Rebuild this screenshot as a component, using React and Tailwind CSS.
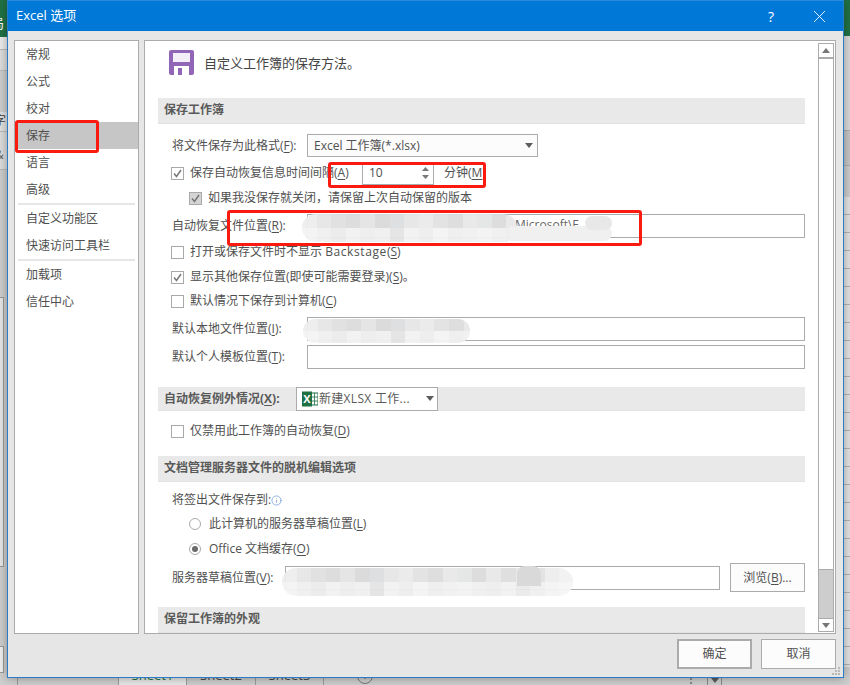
import React from 'react';
import { Info, X } from 'lucide-react';

const navGroups = [
    ['常规', '公式', '校对', '保存', '语言', '高级'],
    ['自定义功能区', '快速访问工具栏'],
    ['加载项', '信任中心'],
];

// mosaic colours of the smudged paths in the screenshot
const mosaicA = ['bg-[#eeeeee]', 'bg-[#e6e6e6]', 'bg-[#e0e0e0]', 'bg-[#dcdcdc]', 'bg-[#e4e4e4]', 'bg-[#dadada]', 'bg-[#dcdee0]', 'bg-[#e6e6e6]', 'bg-[#eaeaea]', 'bg-[#e2e2e2]', 'bg-[#dddddd]', 'bg-[#e8e8e8]', 'bg-[#e4e6e6]', 'bg-[#dcdcdc]', 'bg-[#e8e8e8]', 'bg-[#dedede]', 'bg-[#e6e8e8]', 'bg-[#e2e2e2]', 'bg-[#eeeeee]', 'bg-[#f2f2f2]'];
const mosaicB = ['bg-[#f4f4f4]', 'bg-[#f0f0f0]', 'bg-[#ececec]', 'bg-[#f2f2f2]', 'bg-[#eeeeee]', 'bg-[#f0f0f0]', 'bg-[#e4e4e4]', 'bg-[#f2f2f2]', 'bg-[#eeeeee]', 'bg-[#f4f4f4]', 'bg-[#efefef]', 'bg-[#f1f1f1]', 'bg-[#f3f3f3]', 'bg-[#f0f0f0]', 'bg-[#eeeeee]', 'bg-[#f2f2f2]', 'bg-[#eaeaea]', 'bg-[#f0f0f0]', 'bg-[#f4f4f4]', 'bg-[#f6f6f6]'];

const Key = ({ children }) => <span className="underline underline-offset-2">{children}</span>;

const Caret = ({ className = '', w = 8, h = 5, fill = '#5c5c5c' }) => (
    <svg width={w} height={h} viewBox="0 0 8 5" preserveAspectRatio="none" className={className}>
        <polygon points="0,0 8,0 4,5" fill={fill} />
    </svg>
);

const SectionBar = ({ children, className = '' }) => (
    <div className={`w-[647px] bg-[#e9e9e9] border-b border-[#e2e2e2] pl-[6px] flex items-center font-bold text-[#5a5a5a] ${className}`}>
        {children}
    </div>
);

const Check = ({ checked, disabled }) => (
    <span className={`w-[13px] h-[13px] border border-[#a9a9a9] shrink-0 flex items-center justify-center ${disabled ? 'bg-[#d4d4d4]' : 'bg-white'}`}>
        {checked && (
            <svg width="11" height="11" viewBox="0 0 11 11">
                <polyline points="2,5.5 4.5,8.5 9,2" fill="none" stroke="#777777" strokeWidth="1.5" />
            </svg>
        )}
    </span>
);

const CheckRow = ({ checked, disabled, className = '', children }) => (
    <div className={`flex items-center h-[24px] ${className}`}>
        <Check checked={checked} disabled={disabled} />
        <span className="ml-[6px]">{children}</span>
    </div>
);

const Radio = ({ checked, children }) => (
    <div className="flex items-center h-[25px] pl-[31px]">
        <span className="w-[12px] h-[12px] rounded-full border border-[#a9a9a9] flex items-center justify-center">
            {checked && <span className="w-[6px] h-[6px] rounded-full bg-[#6a6a6a]" />}
        </span>
        <span className="ml-[8px]">{children}</span>
    </div>
);

const Smudge = ({ className, cells }) => (
    <div className={`absolute overflow-hidden rounded-[14px] flex flex-col opacity-95 ${className}`}>
        <div className="flex h-1/2">
            {cells.map((c, i) => <div key={i} className={`w-[14.6px] shrink-0 ${c}`} />)}
        </div>
        <div className="flex h-1/2">
            {mosaicB.map((c, i) => <div key={i} className={`w-[14.6px] shrink-0 ${c}`} />)}
        </div>
    </div>
);

const RedBox = ({ className }) => (
    <div className={`absolute border-[3px] border-[#fb1a10] rounded-[3px] ${className}`} />
);

const FloppyIcon = () => (
    <svg width="25" height="25" viewBox="0 0 25 25" className="block">
        <path d="M0 2a2 2 0 0 1 2-2h21a2 2 0 0 1 2 2v21a2 2 0 0 1-2 2H2a2 2 0 0 1-2-2z" fill="#9266b6" />
        <rect x="4" y="3" width="17" height="9" fill="#f3eef8" />
        <rect x="5" y="16" width="15" height="9" fill="#ffffff" />
        <rect x="9" y="18" width="4" height="7" fill="#9266b6" />
    </svg>
);

const ExcelIcon = () => (
    <svg width="16" height="16" viewBox="0 0 16 16" className="shrink-0 mr-[1px]">
        <rect x="6" y="2" width="10" height="12" fill="#ffffff" stroke="#1e7145" />
        <path d="M9 2v12M12.5 2v12M6 6h10M6 10h10" stroke="#1e7145" strokeWidth="0.8" />
        <rect x="0" y="0.5" width="10" height="15" fill="#1e7145" />
        <text x="5" y="12" textAnchor="middle" fontSize="11" fontWeight="700" fill="#ffffff">X</text>
    </svg>
);

const Backdrop = () => (
    <div className="absolute inset-0 bg-[#cfcfcf] overflow-hidden">
        <div className="absolute left-0 top-0 w-full h-[37px] bg-[#217346]" />
        <span className="absolute left-[-9px] top-[14px] text-[13px] text-white">局</span>
        <div className="absolute left-0 top-[37px] w-[7px] h-[12px] bg-[#eeeeee]" />
        <div className="absolute left-0 top-[49px] w-[7px] h-[22px] bg-[#dfdfdf] border-y border-[#bdbdbd]" />
        <div className="absolute left-0 top-[112px] w-[7px] h-[20px] bg-[#e2e2e2]" />
        <span className="absolute left-[-6px] top-[112px] text-[12px] text-[#444444]">字</span>
        <div className="absolute left-0 top-[131px] w-[7px] h-[39px] bg-[#dedede] border-y border-[#bbbbbb]" />
        <span className="absolute left-[-5px] top-[146px] text-[12px] text-[#666666]">&amp;</span>
        <div className="absolute left-0 top-[297px] w-[4px] h-[270px] bg-[#e8e8e8] border-r border-y border-[#9a9a9a]" />
        <div className="absolute left-0 top-[646px] w-[4px] h-[27px] bg-[#f2f2f2] border-r border-y border-[#9a9a9a]" />

        <div className="absolute left-[843px] top-[130px] w-[7px] h-[36px] bg-[#c8c8c8] border-y border-[#b0b0b0]" />
        <div className="absolute left-[843px] top-[197px] w-[7px] h-[470px] bg-[repeating-linear-gradient(to_bottom,#e6e6e6_0px,#e6e6e6_17px,#b5b5b5_17px,#b5b5b5_18px)]" />
        <div className="absolute left-[843px] top-[36px] w-[7px] h-[94px] bg-[#dcdcdc]" />

        {/* sheet tabs, mostly under the dialog */}
        <div className="absolute left-[17px] top-[666px] h-[19px] flex items-start text-[13px] leading-[19px] text-[#444444]">
            <div className="w-[101px] border-l border-[#9c9c9c] h-full" />
            <div className="w-[69px] h-full text-center bg-[#e9e9e9] border-x border-[#9c9c9c] text-[#217346]">Sheet1</div>
            <div className="w-[69px] h-full text-center border-r border-[#9c9c9c]">Sheet2</div>
            <div className="w-[68px] h-full text-center border-r border-[#9c9c9c]">Sheet3</div>
            <div className="ml-[33px] mt-[2px] w-[16px] h-[16px] rounded-full border border-[#777777] flex items-center justify-center text-[12px] leading-none">+</div>
        </div>
        <svg width="2" height="7" viewBox="0 0 2 7" className="absolute left-[690px] top-[678px]">
            <path d="M0 0h2v2H0zM0 4h2v2H0z" fill="#8a8a8a" />
        </svg>
        <div className="absolute left-[707px] top-[678px] w-[15px] h-[7px] border-x border-[#8c8c8c] flex justify-center">
            <Caret />
        </div>
    </div>
);

export default function App() {
    return (
        <div className="relative w-[850px] h-[685px] overflow-hidden text-[12px] text-[#505050] font-['Open_Sans','Noto_Sans_CJK_SC',sans-serif]">
            <Backdrop />

            {/* dialog window */}
            <div className="absolute left-[7px] top-0 w-[837px] h-[678px] bg-[#e6e6e6] border border-t-0 border-[#2b7cc7] shadow-[0_0_10px_rgba(0,0,0,0.35)] flex flex-col">
                <div className="h-[31px] shrink-0 bg-[#0078d7] border-t border-[#2a8ade] flex items-center text-white pl-[8px] pr-[13px] text-[13px]">
                    <span>Excel 选项</span>
                    <span className="ml-auto mr-[35px] text-[14px]">?</span>
                    <X size={21} strokeWidth={1} />
                </div>

                <div className="flex gap-[5px] pl-[6px] pr-[7px] pt-[9px]">
                    {/* left nav */}
                    <nav className="w-[125px] h-[594px] bg-white border border-[#ababab] p-0">
                        {navGroups.map((group, g) => (
                            <div key={g} className={g > 0 ? 'border-t-2 border-[#e6e6e6] mx-[3px]' : ''}>
                                {group.map((item) => (
                                    <div
                                        key={item}
                                        className={`h-[27px] flex items-center ${g > 0 ? 'pl-[8px]' : 'pl-[11px]'} ${item === '保存' ? 'bg-[#c6c6c6]' : ''}`}
                                    >
                                        {item}
                                    </div>
                                ))}
                            </div>
                        ))}
                    </nav>

                    {/* right panel */}
                    <div className="w-[692px] h-[594px] bg-white border border-[#ababab] flex">
                        <div className="flex-1 overflow-hidden pl-[13px]">
                            <div className="h-[57px] pl-[11px] pt-[9px] flex items-start">
                                <FloppyIcon />
                                <span className="ml-[10px] mt-[4px] text-[13px] leading-[18px] text-[#444444]">自定义工作簿的保存方法。</span>
                            </div>

                            <SectionBar className="h-[26px] pb-[2px]">保存工作簿</SectionBar>

                            <div className="flex items-center h-[23px] mt-[10px] pl-[14px]">
                                <span className="w-[135px]">将文件保存为此格式(<Key>F</Key>):</span>
                                <div className="w-[231px] h-[23px] bg-[#fcfcfc] border border-[#ababab] flex items-center pl-[6px] pr-[4px]">
                                    <span>Excel 工作簿(*.xlsx)</span>
                                    <Caret className="ml-auto" />
                                </div>
                            </div>

                            <div className="flex items-center h-[24px] mt-[4px] pl-[13px]">
                                <Check checked />
                                <span className="ml-[6px] w-[172px] whitespace-nowrap">保存自动恢复信息时间间隔(<Key>A</Key>)</span>
                                <div className="w-[72px] h-[23px] border border-[#ababab] bg-white flex items-center pl-[6px] pr-[4px]">
                                    <span>10</span>
                                    <div className="ml-auto flex flex-col gap-[4px]">
                                        <Caret className="rotate-180" w={7} h={4} fill="#777777" />
                                        <Caret w={7} h={4} fill="#777777" />
                                    </div>
                                </div>
                                <span className="ml-[10px]">分钟(<Key>M</Key>)</span>
                            </div>

                            <CheckRow checked disabled className="mt-[1px] pl-[31px]">如果我没保存就关闭，请保留上次自动保留的版本</CheckRow>

                            <div className="flex items-center h-[24px] mt-[4px] pl-[14px]">
                                <span className="w-[135px]">自动恢复文件位置(<Key>R</Key>):</span>
                                <div className="w-[498px] h-[24px] border border-[#ababab] bg-white" />
                            </div>

                            <CheckRow className="mt-[2px] pl-[13px]">打开或保存文件时不显示 <span className="tracking-[0.6px]">Backstage</span>(<Key>S</Key>)</CheckRow>
                            <CheckRow checked className="mt-[1px] pl-[13px]">显示其他保存位置(即使可能需要登录)(<Key>S</Key>)。</CheckRow>
                            <CheckRow className="pl-[13px]">默认情况下保存到计算机(<Key>C</Key>)</CheckRow>

                            <div className="flex items-center h-[24px] mt-[4px] pl-[14px]">
                                <span className="w-[135px]">默认本地文件位置(<Key>I</Key>):</span>
                                <div className="w-[498px] h-[24px] border border-[#ababab] bg-white" />
                            </div>
                            <div className="flex items-center h-[24px] mt-[4px] pl-[14px]">
                                <span className="w-[135px]">默认个人模板位置(<Key>T</Key>):</span>
                                <div className="w-[498px] h-[24px] border border-[#ababab] bg-white" />
                            </div>

                            <SectionBar className="h-[24px] mt-[18px]">
                                <span className="w-[132px]">自动恢复例外情况(<Key>X</Key>):</span>
                                <div className="w-[142px] h-[24px] bg-white border border-[#ababab] flex items-center pl-[5px] pr-[3px] font-normal">
                                    <ExcelIcon />
                                    <span className="whitespace-nowrap tracking-[0.3px]">新建XLSX 工作...</span>
                                    <Caret className="ml-auto" />
                                </div>
                            </SectionBar>

                            <CheckRow className="mt-[8px] pl-[13px]">仅禁用此工作簿的自动恢复(<Key>D</Key>)</CheckRow>

                            <SectionBar className="h-[26px] mt-[13px] pb-[2px]">文档管理服务器文件的脱机编辑选项</SectionBar>

                            <div className="flex items-center h-[22px] mt-[7px] pl-[14px]">
                                <span>将签出文件保存到:</span>
                                <Info size={11} strokeWidth={1.3} className="text-[#4a80cf]" />
                            </div>
                            <Radio>此计算机的服务器草稿位置(<Key>L</Key>)</Radio>
                            <Radio checked>Office 文档缓存(<Key>O</Key>)</Radio>

                            <div className="flex items-center h-[29px] mt-[2px] pl-[14px]">
                                <span className="w-[113px]">服务器草稿位置(<Key>V</Key>):</span>
                                <div className="w-[435px] h-[24px] border border-[#ababab] bg-white" />
                                <button className="ml-[10px] w-[75px] h-[29px] bg-[#fcfcfc] border border-[#ababab] text-[#505050]">浏览(<Key>B</Key>)...</button>
                            </div>

                            <SectionBar className="h-[26px] mt-[15px] pb-[2px]">保留工作簿的外观</SectionBar>
                        </div>

                        {/* scrollbar */}
                        <div className="w-[16px] mr-[1px] mt-[2px] mb-[1px] border-x border-[#ababab] flex flex-col bg-[#cdcdcd]">
                            <div className="h-[14px] bg-white border-t border-[#ababab] flex items-center justify-center">
                                <Caret className="rotate-180" fill="#777777" />
                            </div>
                            <div className="h-[513px] bg-white border-t-2 border-b border-[#ababab]" />
                            <div className="flex-1" />
                            <div className="h-[14px] bg-white border-y border-[#ababab] flex items-center justify-center">
                                <Caret fill="#777777" />
                            </div>
                        </div>
                    </div>
                </div>

                {/* footer buttons */}
                <div className="flex justify-end gap-[9px] pr-[7px] pt-[5px]">
                    <button className="w-[75px] h-[30px] bg-[#fcfcfc] border-2 border-[#ababab] text-[#505050]">确定</button>
                    <button className="w-[75px] h-[30px] bg-[#fcfcfc] border border-[#ababab] text-[#505050]">取消</button>
                </div>

                <svg width="8" height="8" viewBox="0 0 8 8" className="absolute right-[3px] bottom-[2px]">
                    <path d="M6 0h2v2H6zM3 3h2v2H3zM6 3h2v2H6zM0 6h2v2H0zM3 6h2v2H3zM6 6h2v2H6z" fill="#b8b8b8" />
                </svg>
            </div>

            {/* smudges the author painted over private paths */}
            <span className="absolute left-[515px] top-[216px] text-[#666666]">Microsoft\E</span>
            <Smudge className="left-[302px] top-[214px] w-[215px] h-[28px]" cells={mosaicA.slice(0, 15)} />
            <div className="absolute left-[510px] top-[226px] w-[102px] h-[15px] bg-[#f0f0f0] rounded-r-[10px]" />
            <div className="absolute left-[585px] top-[216px] w-[27px] h-[14px] bg-[#e8e8e8] rounded-[10px]" />
            <Smudge className="left-[303px] top-[319px] w-[167px] h-[24px]" cells={mosaicA} />
            <Smudge className="left-[282px] top-[568px] w-[291px] h-[28px]" cells={mosaicA} />
            <div className="absolute left-[517px] top-[566px] w-[24px] h-[20px] bg-[#d9d9d9] rounded-t-[8px]" />

            {/* red annotation boxes */}
            <RedBox className="left-[15px] top-[120px] w-[84px] h-[33px]" />
            <RedBox className="left-[328px] top-[162px] w-[158px] h-[26px]" />
            <RedBox className="left-[227px] top-[210px] w-[415px] h-[36px]" />
        </div>
    );
}
